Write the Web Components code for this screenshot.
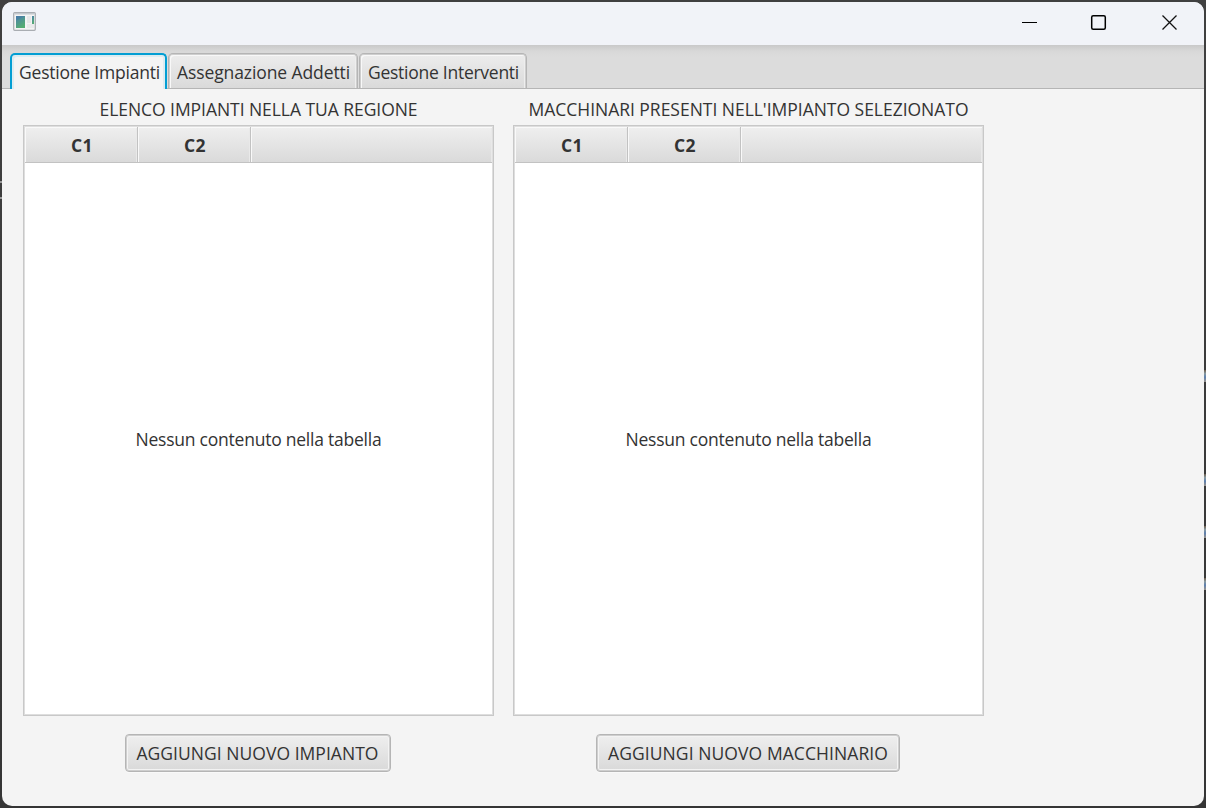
<!DOCTYPE html>
<html lang="it"><head><meta charset="utf-8"><title>Gestione Impianti</title>
<style>
html,body{margin:0;width:1206px;height:808px;overflow:hidden;background:#383838}
body{font-family:"Open Sans","Noto Sans",sans-serif;font-size:17.5px;color:#333}
</style></head><body>
<app-window></app-window>
<script>
const define=(name,html,ready)=>{
  const t=document.createElement('template');t.innerHTML=html;
  customElements.define(name,class extends HTMLElement{
    connectedCallback(){
      if(!this.shadowRoot)this.attachShadow({mode:'open'}).append(t.content.cloneNode(true));
      if(ready)ready(this,this.shadowRoot);
    }
  });
};
// A single-line label whose tracking is adjusted to a given advance width.
define('fit-label',`<style>:host{display:block;white-space:nowrap;line-height:24px;height:24px}span{display:inline-block}</style><span><slot></slot></span>`,(el,root)=>{
  const s=root.querySelector('span'),w=+el.getAttribute('width'),n=el.textContent.length;
  el.style.width=w+'px';
  s.style.letterSpacing=(w-s.getBoundingClientRect().width)/n+'px';
});
define('title-bar',`<style>
:host{display:flex;height:43px;box-sizing:border-box;background:#f1f3f8;padding:10px 26px 0 11px;justify-content:space-between}
svg{display:block}.c{display:flex;gap:52px;padding-top:2px}.c svg:last-child{margin-left:2px}</style>
<svg width="24" height="20" viewBox="0 0 24 20"><defs><linearGradient id="g" x1="0" y1="0" x2=".5" y2="1"><stop stop-color="#4a7fae"/><stop offset="1" stop-color="#55ad72"/></linearGradient></defs>
<rect x=".7" y=".7" width="21.6" height="17.6" rx="1" fill="#f4f4f4" stroke="#a9adb2" stroke-width="1.3"/><path d="M1.5 1.8H21.5" stroke="#c3c8ce" stroke-width="1.4"/><rect x="3" y="4" width="9" height="12" fill="url(#g)"/><path d="M3 8Q7 7 12 4H3Z" fill="#487ba5" opacity=".6"/><rect x="14" y="4" width="4" height="7" fill="#e6e7e8"/><rect x="14" y="12" width="7" height="4" fill="#e9eaeb"/><rect x="19" y="4" width="2" height="8" fill="url(#g)"/></svg>
<div class="c">
<svg width="17" height="17"><path d="M1 8.5H16" stroke="#000" stroke-width="1.2"/></svg>
<svg width="17" height="17"><rect x="1.7" y="1.7" width="13.6" height="13.6" rx="1.5" fill="none" stroke="#000" stroke-width="1.5"/></svg>
<svg width="17" height="17"><path d="M1.5 1.5L15.5 15.5M15.5 1.5L1.5 15.5" stroke="#111" stroke-width="1.3"/></svg></div>`);
define('tab-item',`<style>
:host{display:block;box-sizing:border-box;height:35px;padding:6px 7px 0 8px;border:1px solid #b5b5b5;border-width:1px 1px 0;border-radius:5px 5px 0 0;background:linear-gradient(#ededed,#dadada);box-shadow:inset 0 1px #cecece,inset 1px 0 #cecece,inset -1px 0 #cecece,inset 2px 2px #f8f8f8,inset -2px 0 #eee}
:host([selected]){height:36px;border:2px solid #039ed3;border-width:2px 2px 0;padding:5px 5px 0 7px;background:#f4f4f4;box-shadow:inset 2px 2px #dcecf1,inset -2px 0 #dcecf1;margin-bottom:-1px}
</style><slot></slot>`);
define('tab-strip',`<style>
:host{display:flex;box-sizing:border-box;height:44px;padding:8px 8px 0;gap:1px;background:linear-gradient(#c9c9c9,#d8d8d8 6px,#dcdcdc 12px,#dcdcdc);border-bottom:1px solid #b5b5b5}
</style><slot></slot>`);
define('table-head',`<style>:host{display:block;flex:1;box-sizing:border-box}
:host([column]){flex:0 0 113px;border-right:1px solid #c2c2c2}
:host{background:linear-gradient(#efefef,#dadada);box-shadow:inset 1px 1px #f9f9f9,inset -1px 0 #e9e9e9}
div{display:flex;justify-content:center;padding:6px 0 0 2px;font-weight:700}</style><div><slot></slot></div>`);
define('data-table',`<style>
:host{display:flex;flex-direction:column;box-sizing:border-box;width:471px;height:591px;border:1px solid #c8c8c8;background:#fff;padding:0 1px 1px;box-shadow:inset 0 0 0 1px #dedede}
.h{display:flex;height:35px;border-bottom:1px solid #c2c2c2;padding-top:1px}
.b{flex:1;display:flex;align-items:center;justify-content:center}</style>
<div class="h"><table-head column><fit-label width="22">C1</fit-label></table-head><table-head column><fit-label width="22">C2</fit-label></table-head><table-head></table-head></div>
<div class="b"><fit-label width="246">Nessun contenuto nella tabella</fit-label></div>`);
define('push-button',`<style>:host{display:block;margin-right:1px}button{display:block;font:inherit;color:inherit;margin:0;height:38px;box-sizing:border-box;padding:0 11px;border:1px solid #b5b5b5;border-radius:4px;background:linear-gradient(#efefef,#d9d9d9);box-shadow:inset 0 0 0 1px #cecece,inset 0 0 0 2px #f3f3f3,0 1px #f9f9f9}</style><button><slot></slot></button>`);
define('table-panel',`<style>
:host{display:flex;flex-direction:column;align-items:center;width:471px}
data-table{margin:4px 0 18px}</style><slot name="title"></slot><data-table></data-table><slot name="action"></slot>`);
define('app-window',`<style>
:host{display:block;box-sizing:border-box;position:relative;width:1206px;height:808px;padding:2px;background:linear-gradient(#404040,#353535)}
.w{height:804px;border-radius:10px;overflow:hidden;background:#f4f4f4}
.p{display:flex;gap:19px;padding:8px 0 0 21px}push-button{margin-right:2px}
i{position:absolute;right:0;width:2px;height:12px;background:linear-gradient(#6b5b4b,#8799a0 30%,#5c7fae 60%,#99928a)}
i.l{right:auto;left:0;height:2px;background:#999}</style>
<div class="w"><title-bar></title-bar>
<tab-strip><tab-item selected><fit-label width="141">Gestione Impianti</fit-label></tab-item><tab-item><fit-label width="173">Assegnazione Addetti</fit-label></tab-item><tab-item><fit-label width="151">Gestione Interventi</fit-label></tab-item></tab-strip>
<div class="p"><table-panel><fit-label slot="title" width="318">ELENCO IMPIANTI NELLA TUA REGIONE</fit-label><push-button slot="action"><fit-label width="242">AGGIUNGI NUOVO IMPIANTO</fit-label></push-button></table-panel>
<table-panel><fit-label slot="title" width="440">MACCHINARI PRESENTI NELL'IMPIANTO SELEZIONATO</fit-label><push-button slot="action" style="margin-right:1px"><fit-label width="280">AGGIUNGI NUOVO MACCHINARIO</fit-label></push-button></table-panel></div></div>
<i style="top:370px"></i><i style="top:474px"></i><i style="top:526px"></i><i style="top:578px"></i><i class="l" style="top:181px"></i><i class="l" style="top:197px"></i>`);
</script></body></html>
